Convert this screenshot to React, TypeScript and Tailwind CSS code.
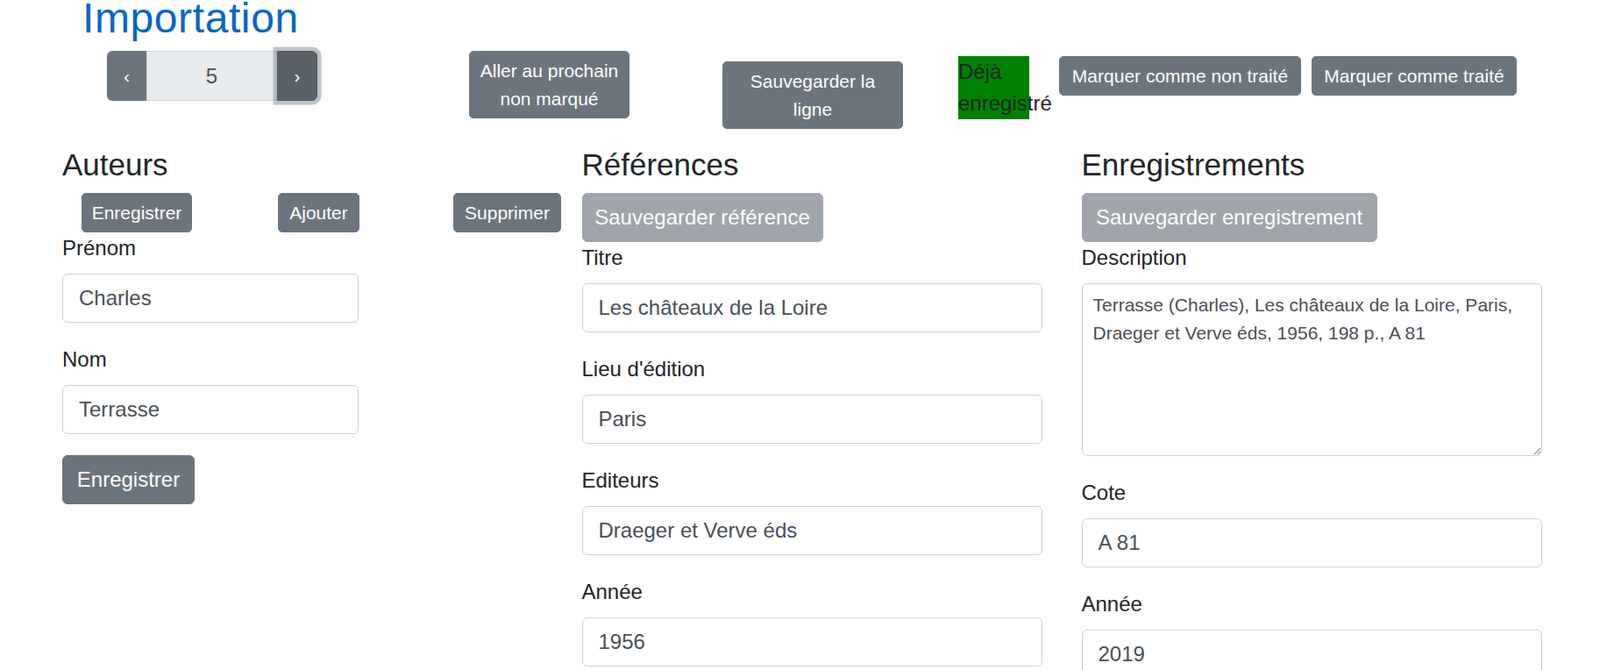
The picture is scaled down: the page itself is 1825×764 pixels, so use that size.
import React from 'react';

const btnBase =
  'bg-[#6c757d] border-[1.5px] border-[#6c757d] text-white text-center whitespace-nowrap';
const btnSm = `${btnBase} h-[45px] text-[21px] leading-[31.5px] rounded-[5px]`;
const btnLg = `${btnBase} h-[56px] text-[24px] leading-[36px] rounded-[6px]`;
const btnDisabled =
  'bg-[#a0a5ab] border-[1.5px] border-[#a0a5ab] text-white h-[56px] text-[24px] leading-[36px] rounded-[6px] whitespace-nowrap';

function Field({ label, value, width }: { label: string; value: string; width?: string }) {
  return (
    <div className="mb-[24px]">
      <label className="block text-[24px] leading-[36px] mb-[11px]">{label}</label>
      <input
        defaultValue={value}
        className={`${width ?? 'w-full'} h-[56px] border-[1.5px] border-[#ced4da] rounded-[6px] px-[18px] text-[24px] text-[#495057] bg-white outline-none`}
      />
    </div>
  );
}

function Heading({ children }: { children: React.ReactNode }) {
  return <h4 className="text-[35px] leading-[43px] mb-[11px] font-normal">{children}</h4>;
}

export default function App() {
  return (
    <div className="w-[1825px] h-[764px] overflow-hidden bg-white text-[#212529] font-['Liberation_Sans',Arial,sans-serif]">
      <div className="ml-[71px] w-[1710px] flex flex-col">
        {/* Title */}
        <div className="h-[58px] flex items-start">
          <h2 className="ml-[23px] mt-[1px] text-[48px] leading-[40px] text-[#0866c6] tracking-[0.6px] font-normal">
            Importation
          </h2>
        </div>

        {/* Toolbar */}
        <div className="h-[108px] flex items-start">
          <div className="ml-[51px] flex h-[57px]">
            <button className="w-[45px] h-[57px] bg-[#6c757d] text-white text-[21px] rounded-l-[6px]">‹</button>
            <div className="w-[149px] h-[57px] bg-[#e9ecef] border-[1.5px] border-[#ced4da] flex items-center justify-center text-[24px] text-[#495057]">
              5
            </div>
            <button className="w-[46px] h-[57px] bg-[#5a6268] border-[1.5px] border-[#545b62] text-white text-[21px] rounded-r-[6px] shadow-[0_0_0_4.5px_rgba(130,138,145,0.5)]">
              ›
            </button>
          </div>

          <button className={`${btnSm} ml-[173px] w-[183px] h-[77px]`}>
            Aller au prochain
            <br />
            non marqué
          </button>

          <button className={`${btnSm} ml-[106px] mt-[12px] w-[206px] h-[77px]`}>
            Sauvegarder la
            <br />
            ligne
          </button>

          <div className="ml-[63px] mt-[6px] w-[81px] h-[72px] bg-[#008000] text-[24px] leading-[36px]">
            Déjà enregistré
          </div>

          <button className={`${btnSm} ml-[34px] mt-[6px] w-[276px]`}>Marquer comme non traité</button>
          <button className={`${btnSm} ml-[12px] mt-[6px] w-[234px]`}>Marquer comme traité</button>
        </div>

        {/* Columns */}
        <div className="grid grid-cols-[570px_570px_570px]">
          {/* Auteurs */}
          <div>
            <Heading>Auteurs</Heading>
            <div className="flex">
              <button className={`${btnSm} ml-[22px] w-[126px]`}>Enregistrer</button>
              <button className={`${btnSm} ml-[98px] w-[93px]`}>Ajouter</button>
              <button className={`${btnSm} ml-[107px] w-[123px]`}>Supprimer</button>
            </div>
            <Field label="Prénom" value="Charles" width="w-[338px]" />
            <Field label="Nom" value="Terrasse" width="w-[338px]" />
            <button className={`${btnLg} w-[151px]`}>Enregistrer</button>
          </div>

          {/* Références */}
          <div className="px-[22.5px]">
            <Heading>Références</Heading>
            <button className={`${btnDisabled} w-[275px]`}>Sauvegarder référence</button>
            <Field label="Titre" value="Les châteaux de la Loire" />
            <Field label="Lieu d'édition" value="Paris" />
            <Field label="Editeurs" value="Draeger et Verve éds" />
            <Field label="Année" value="1956" />
          </div>

          {/* Enregistrements */}
          <div className="px-[22.5px]">
            <Heading>Enregistrements</Heading>
            <button className={`${btnDisabled} w-[337px]`}>Sauvegarder enregistrement</button>
            <div className="mb-[24px]">
              <label className="block text-[24px] leading-[36px] mb-[11px]">Description</label>
              <textarea
                defaultValue="Terrasse (Charles), Les châteaux de la Loire, Paris, Draeger et Verve éds, 1956, 198 p., A 81"
                className="block w-full h-[197px] border-[1.5px] border-[#ced4da] rounded-[6px] px-[12px] pt-[8px] text-[21px] leading-[31.5px] text-[#495057] outline-none resize"
              />
            </div>
            <Field label="Cote" value="A 81" />
            <Field label="Année" value="2019" />
          </div>
        </div>
      </div>
    </div>
  );
}
